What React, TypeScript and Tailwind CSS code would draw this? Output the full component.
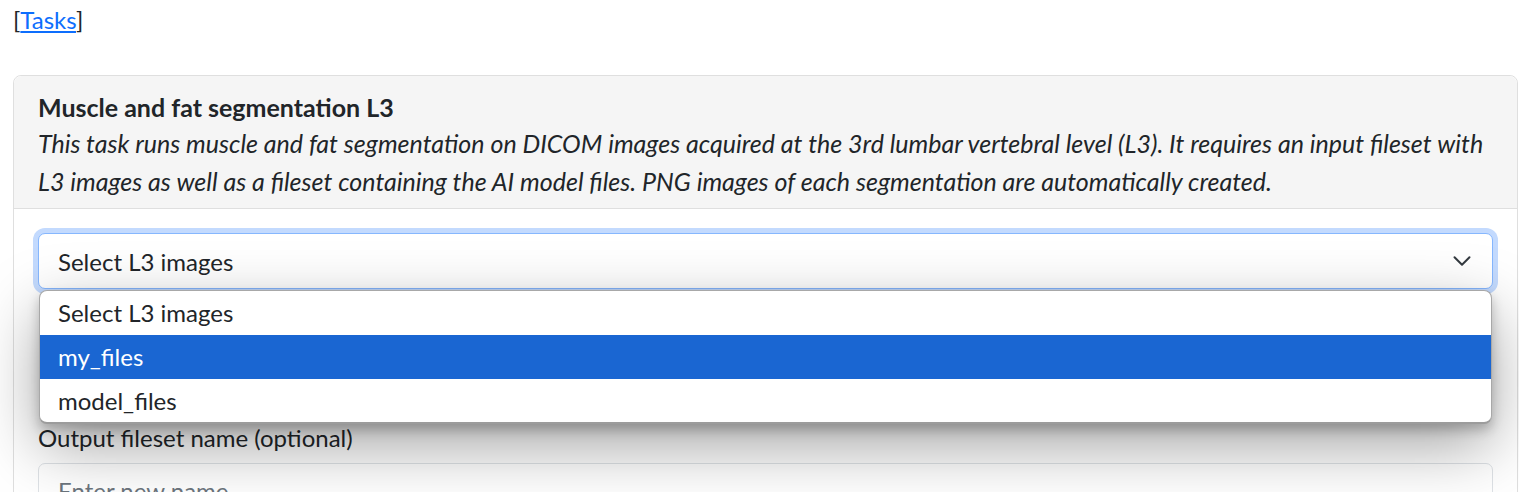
const font = { fontFamily: 'Lato, "Open Sans", sans-serif' };

export default function App() {
  return (
    <div
      className="h-[492px] overflow-hidden bg-white pl-[13px] pr-px text-[24px] text-[#212529]"
      style={font}
    >
      <div className="pt-[5px] leading-[30px]">
        [<a href="#" className="text-[#0d6efd] underline">Tasks</a>]
      </div>

      <section className="mt-[40px] rounded-[8px] border border-[#dfdfdf]">
        <div className="rounded-t-[8px] border-b border-[#dfdfdf] bg-[#f5f5f5] px-[24px] pt-[16px] pb-[8px]">
          <h1 className="text-[25px] font-bold leading-[30px]">
            Muscle and fat segmentation L3
          </h1>
          <p className="mt-[2px] text-[25px] italic leading-[38px]">
            This task runs muscle and fat segmentation on DICOM images acquired
            at the 3rd lumbar vertebral level (L3). It requires an input fileset
            with L3 images as well as a fileset containing the AI model files.
            PNG images of each segmentation are automatically created.
          </p>
        </div>

        <div className="px-[24px] pt-[24px]">
          <div className="relative">
            <div className="flex h-[56px] items-center justify-between rounded-[7px] border border-[#86b7fe] bg-white pt-[2px] pl-[19px] pr-[20px] shadow-[0_0_0_5px_#c3dafe]">
              <span>Select L3 images</span>
              <svg
                width="20"
                height="20"
                viewBox="0 0 16 16"
                fill="none"
                stroke="#343a40"
                strokeWidth="1.6"
                strokeLinecap="round"
                strokeLinejoin="round"
                className="-mt-[3px]"
              >
                <path d="m2 5 6 6 6-6" />
              </svg>
            </div>

            <ul className="absolute left-px right-px top-[57px] z-10 overflow-hidden rounded-[8px] border border-[#a8a8a8] border-b-2 border-b-[#9c9c9c] bg-white shadow-[0_6px_12px_rgba(0,0,0,0.22),0_22px_64px_rgba(0,0,0,0.36)]">
              <li className="flex h-[44px] items-center pl-[18px]">Select L3 images</li>
              <li className="flex h-[44px] items-center bg-[#1a66d2] pl-[18px] text-white">
                my_files
              </li>
              <li className="flex h-[43px] items-center pl-[18px]">model_files</li>
            </ul>
          </div>

          <div className="h-[134px]" />

          <label className="block leading-[30px]">Output fileset name (optional)</label>

          <div className="mt-[10px] flex h-[56px] items-center rounded-[7px] border border-[#dee2e6] bg-white pl-[19px] text-[#6c757d]">
            Enter new name
          </div>
        </div>
      </section>
    </div>
  );
}
